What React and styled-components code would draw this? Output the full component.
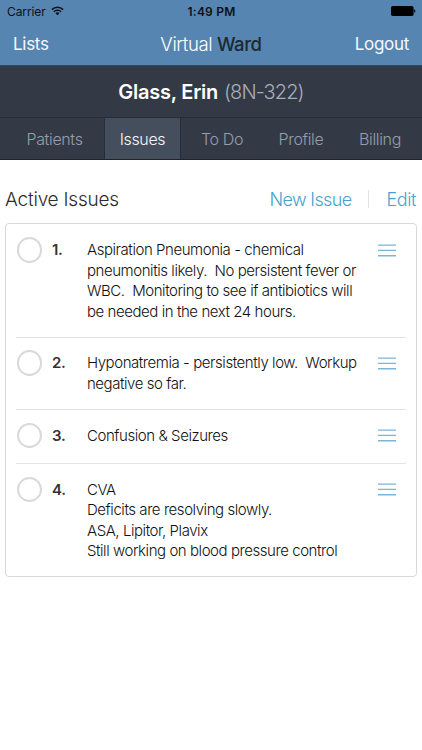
import React from 'react';
import styled, { createGlobalStyle } from 'styled-components';

const issues = [
  {
    lines: [
      'Aspiration Pneumonia - chemical',
      'pneumonitis likely.  No persistent fever or',
      'WBC.  Monitoring to see if antibiotics will',
      'be needed in the next 24 hours.',
    ],
    height: 112.5,
  },
  {
    lines: ['Hyponatremia - persistently low.  Workup', 'negative so far.'],
    height: 72.3,
  },
  { lines: ['Confusion & Seizures'], height: 54 },
  {
    lines: [
      'CVA',
      'Deficits are resolving slowly.',
      'ASA, Lipitor, Plavix',
      'Still working on blood pressure control',
    ],
    height: 113,
  },
];

const tabs = ['Patients', 'Issues', 'To Do', 'Profile', 'Billing'];

const WifiIcon = () => (
  <svg width="13" height="10" viewBox="0 0 13 10" fill="none" stroke="#0b1117">
    <path d="M0.9 3.6a8 8 0 0 1 11.2 0" strokeWidth="1.6" />
    <path d="M2.9 5.7a5.1 5.1 0 0 1 7.2 0" strokeWidth="1.5" />
    <path d="M6.5 9.3L4.5 7.3a2.9 2.9 0 0 1 4 0z" fill="#0b1117" stroke="none" />
  </svg>
);

const BatteryIcon = () => (
  <svg width="25" height="10" viewBox="0 0 25 10" fill="#000">
    <rect x="0" y="0" width="22.6" height="10" rx="1.8" />
    <path d="M23.2 3.2c1.6.5 1.6 3.1 0 3.6z" />
  </svg>
);

const HandleIcon = () => (
  <svg width="18" height="13" viewBox="0 0 18 13" stroke="#79b7da" strokeWidth="1.4">
    <path d="M0 1.1h18M0 6.4h18M0 11.7h18" />
  </svg>
);

const App = () => {
  return (
    <Screen>
      <GlobalStyle />
      <TopBar>
        <StatusBar>
          <Carrier>
            <span>Carrier</span>
            <WifiIcon />
          </Carrier>
          <Clock>1:49 PM</Clock>
          <BatteryIcon />
        </StatusBar>
        <NavBar>
          <NavLink>Lists</NavLink>
          <Title>
            Virtual <b>Ward</b>
          </Title>
          <NavLink>Logout</NavLink>
        </NavBar>
      </TopBar>
      <PatientBar>
        <b>Glass, Erin</b>
        <span>(8N-322)</span>
      </PatientBar>
      <Tabs>
        {tabs.map((tab) => (
          <Tab key={tab} $active={tab === 'Issues'}>{tab}</Tab>
        ))}
      </Tabs>
      <SectionHeader>
        <Heading>Active Issues</Heading>
        <Action $spacing="-0.65px">New Issue</Action>
        <Divider />
        <Action $spacing="-0.4px">Edit</Action>
      </SectionHeader>
      <IssueList>
        {issues.map((issue, i) => (
          <Issue key={i} $height={issue.height}>
            <Circle />
            <Number>{i + 1}.</Number>
            <Description>{issue.lines.join('\n')}</Description>
            <Handle>
              <HandleIcon />
            </Handle>
          </Issue>
        ))}
      </IssueList>
    </Screen>
  );
};

export default App;

const GlobalStyle = createGlobalStyle`
  * {
    box-sizing: border-box;
  }

  body {
    margin: 0;
    background: #fff;
    font-family: Inter, "Liberation Sans", sans-serif;
    font-weight: 300;
  }
`

const Screen = styled.div`
  width: 422px;
  height: 750px;
  overflow: hidden;
  background: #fff;
`

const TopBar = styled.header`
  height: 66px;
  background: #5785b1;
  border-bottom: 1px solid #30475f;
`

const StatusBar = styled.div`
  display: grid;
  grid-template-columns: 1fr auto 1fr;
  align-items: center;
  height: 22px;
  padding: 0 6px 0 7px;
  font-size: 12px;
  color: #0b1117;

  > svg {
    justify-self: end;
  }
`

const Carrier = styled.div`
  display: flex;
  align-items: center;
  gap: 5px;
  font-weight: 400;
  letter-spacing: -0.1px;
`

const Clock = styled.span`
  font-weight: 600;
  letter-spacing: 0.2px;
`

const NavBar = styled.nav`
  display: grid;
  grid-template-columns: 1fr auto 1fr;
  align-items: center;
  height: 43px;
  padding: 0 13px;
`

const NavLink = styled.span`
  font-size: 17px;
  font-weight: 400;
  letter-spacing: -0.3px;
  color: #f4f8fc;

  &:last-child {
    justify-self: end;
  }
`

const Title = styled.h1`
  margin: 0;
  font-size: 18.5px;
  font-weight: 300;
  letter-spacing: -0.4px;
  color: #fff;

  b {
    font-weight: 500;
    color: #1c2833;
  }
`

const PatientBar = styled.div`
  display: flex;
  align-items: center;
  justify-content: center;
  gap: 6px;
  height: 52px;
  background: #333a46;
  border-bottom: 1px solid #282e38;
  font-size: 20px;
  letter-spacing: -0.9px;
  color: #a7adbd;

  b {
    font-weight: 600;
    letter-spacing: -0.25px;
    color: #fff;
  }
`

const Tabs = styled.nav`
  display: grid;
  grid-template-columns: 99px 77px 82px 76px 82px;
  height: 42px;
  padding-left: 5px;
  background: #333a46;
  border-bottom: 1px solid #20252d;
`

const Tab = styled.span`
  display: flex;
  align-items: center;
  justify-content: center;
  padding-top: 1px;
  font-size: 16px;
  letter-spacing: -0.35px;
  color: ${({ $active }) => ($active ? '#f5f7fa' : '#979daa')};
  background: ${({ $active }) => ($active ? '#454e5d' : 'transparent')};
  border: solid ${({ $active }) => ($active ? '#272d37' : 'transparent')};
  border-width: 0 1px;
`

const SectionHeader = styled.div`
  display: flex;
  align-items: center;
  height: 63px;
  padding: 15px 6px 0 5px;
`

const Heading = styled.h2`
  flex: 1;
  margin: 0;
  font-size: 19px;
  font-weight: 300;
  letter-spacing: -0.2px;
  color: #2c2c2c;
`

const Action = styled.span`
  font-size: 18px;
  letter-spacing: ${({ $spacing }) => $spacing};
  color: #4a9fcd;
`

const Divider = styled.div`
  width: 1px;
  height: 18px;
  margin: 0 17px;
  background: #dfe1e3;
`

const IssueList = styled.div`
  height: 354px;
  margin: 0 5px;
  padding: 0 10px;
  border: 1px solid #d8d8d8;
  border-radius: 4px;
`

const Issue = styled.div`
  display: flex;
  height: ${({ $height }) => $height}px;
  padding-top: 13px;

  & + & {
    padding-top: 12.5px;
    border-top: 1px solid #e4e4e4;
  }
`

const Circle = styled.div`
  flex: none;
  width: 25.5px;
  height: 25.5px;
  margin: 0.3px 0 0 0.7px;
  border: 2px solid #d9d9d9;
  border-radius: 50%;
`

const Number = styled.span`
  flex: none;
  width: 35px;
  margin-left: 9.8px;
  padding-top: 3.4px;
  font-size: 15px;
  line-height: 20.4px;
  font-weight: 600;
  letter-spacing: -0.3px;
  color: #333;
`

const Description = styled.p`
  flex: 1;
  margin: 0;
  padding-top: 3.4px;
  font-size: 15px;
  line-height: 20.4px;
  letter-spacing: -0.44px;
  white-space: pre;
  color: #111;
`

const Handle = styled.div`
  display: flex;
  flex: none;
  align-items: flex-start;
  padding: 7px 10px 0 0;
`
